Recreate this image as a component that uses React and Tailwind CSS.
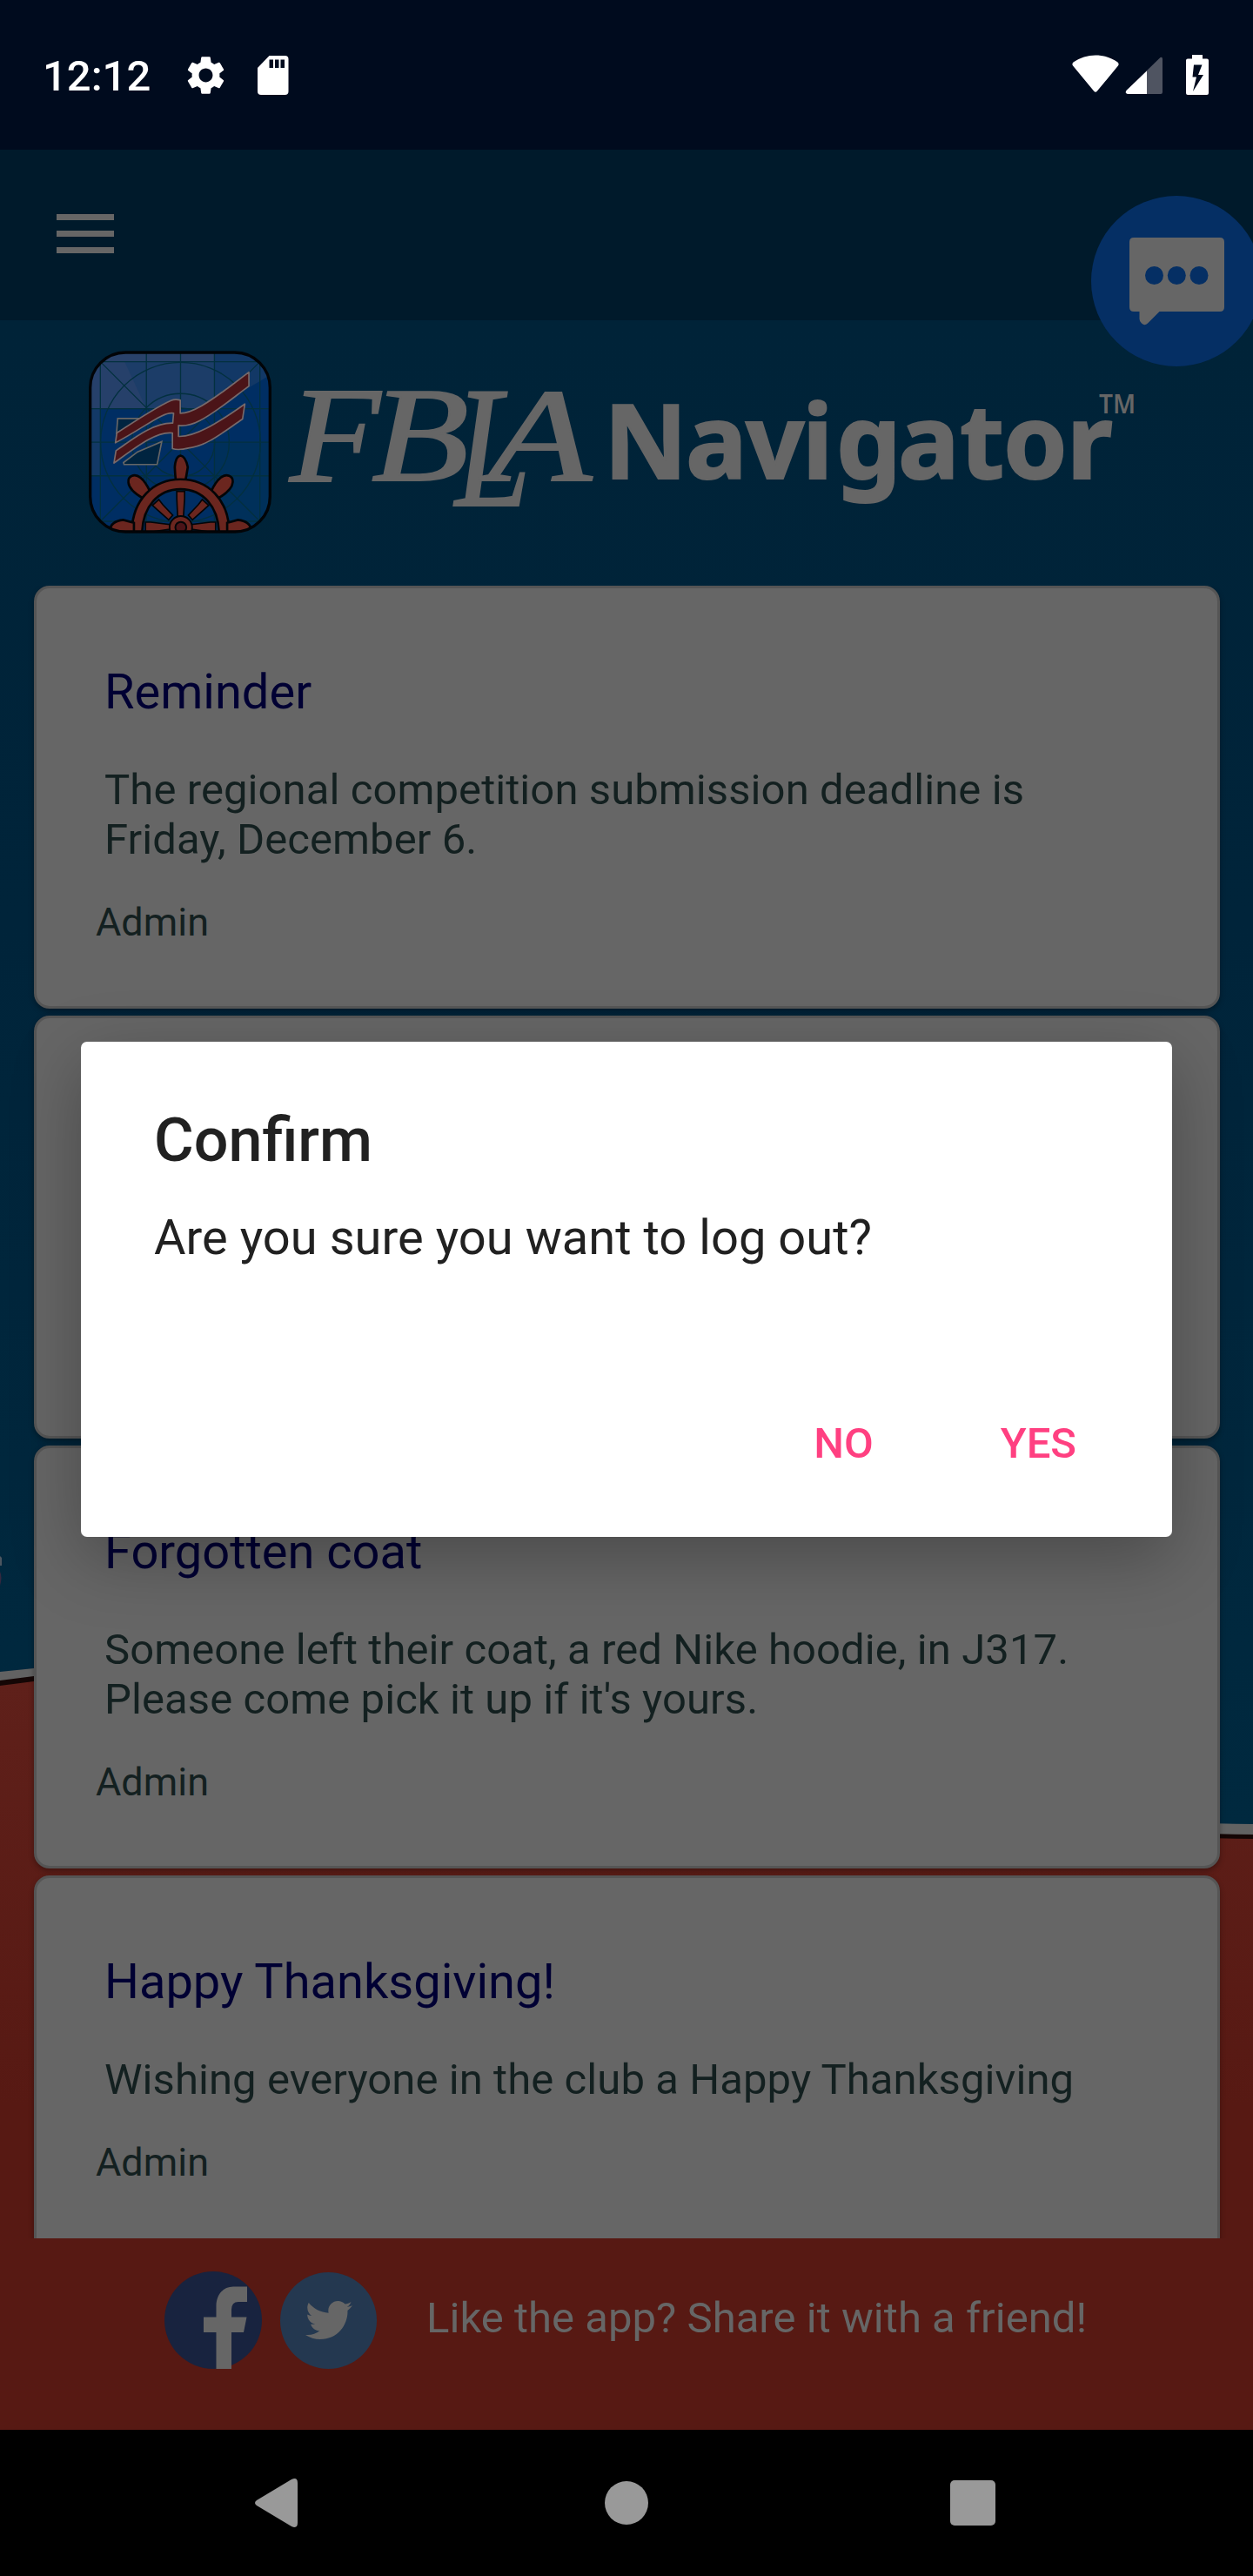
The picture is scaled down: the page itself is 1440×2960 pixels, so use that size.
import React from "react";
import { MdSettings } from "react-icons/md";
import { FaTwitter } from "react-icons/fa";

const posts = [
  { id: 1, title: "Reminder", lines: ["The regional competition submission deadline is", "Friday, December 6."] },
  { id: 2 },
  { id: 3, title: "Forgotten coat", lines: ["Someone left their coat, a red Nike hoodie, in J317.", "Please come pick it up if it's yours."] },
  { id: 4, title: "Happy Thanksgiving!", lines: ["Wishing everyone in the club a Happy Thanksgiving"] },
];

function Backdrop() {
  return (
    <svg className="absolute inset-0 h-full w-full" viewBox="0 0 1440 2960" aria-hidden="true">
      <defs>
        <linearGradient id="sea" x1="0" y1="368" x2="0" y2="2100" gradientUnits="userSpaceOnUse">
          <stop offset="0" stopColor="#002338" />
          <stop offset="0.4" stopColor="#00243a" />
          <stop offset="1" stopColor="#00293f" />
        </linearGradient>
        <linearGradient id="coral" x1="0" y1="1930" x2="0" y2="2420" gradientUnits="userSpaceOnUse">
          <stop offset="0" stopColor="#5f201a" />
          <stop offset="1" stopColor="#571913" />
        </linearGradient>
      </defs>
      <rect width="1440" height="2960" fill="url(#sea)" />
      <path d="M0 1921 L39 1917 C400 1890 1000 2096 1440 2096 V2200 H0Z" fill="#626262" />
      <path d="M0 1931 L39 1926 C400 1900 1000 2107 1440 2108 V2200 H0Z" fill="#140605" />
      <path d="M0 1937 L39 1932 C400 1906 1000 2113 1440 2113 V2960 H0Z" fill="url(#coral)" />
      <path d="M0 1788 L2 1790 V1799 H0Z" fill="#4c5660" />
      <path d="M0 1806 Q3 1812 0 1822Z" fill="#35283f" />
    </svg>
  );
}

function StatusBar() {
  return (
    <div className="relative flex h-[172px] items-center justify-between bg-[#000b1e] pr-[50px] pl-[49px] text-white">
      <div className="flex items-center">
        <span className="w-[161px] pt-[4px] text-[49px] leading-[58px] font-medium">12:12</span>
        <MdSettings className="size-[53px]" />
        <svg className="ml-[33px] h-[45px] w-[36px]" viewBox="0 0 36 45">
          <path d="M13.500 0H31.500a4 4 0 0 1 4 4V41a4 4 0 0 1-4 4H4a4 4 0 0 1-4-4V14Z" fill="#fff" />
          <path d="M13.500 4.500h4.500v9.500h-4.500zM20 4.500h4.500v9.500H20zM26.500 4.500H31v9.500h-4.500z" fill="#000b1e" />
        </svg>
      </div>
      <svg className="h-[46px] w-[158px]" viewBox="0 0 158 46">
        <path d="M1 12.500Q-.5 10.500 1.500 8.500C17-2.300 37-2.300 52.500 8.500Q54.500 10.500 53 12.500L29 41.500Q27 44 25 41.500Z" fill="#fff" />
        <path d="M101.500 3Q104 2 104 5V43q0 2-2 2H64q-4-1-1-4.500Z" fill="#4f5461" />
        <path d="M86 18.500V45H64q-4-1-1-4.500Z" fill="#fff" />
        <path d="M138 0h12v4.500h5a2 2 0 0 1 2 2V44a2 2 0 0 1-2 2h-22a2 2 0 0 1-2-2V6.500a2 2 0 0 1 2-2h5Z" fill="#fff" />
        <path d="M140 11.500h9.500l-4.500 11.500h6L139 42l4-16.500h-4.500Z" fill="#000b1e" />
      </svg>
    </div>
  );
}

function ChatHead() {
  return (
    <svg className="absolute top-[225px] left-[1254px] h-[196px] w-[186px]" viewBox="0 0 186 196">
      <circle cx="98" cy="98" r="98" fill="#052f64" />
      <path d="M49 48H148q5 0 5 5V128q0 5-5 5H78.500L65 146.500q-3.500 3.500-7 0q-2.500-2-2.500-5V133H49q-5 0-5-5V53q0-5 5-5Z" fill="#666" />
      <circle cx="72.500" cy="91.500" r="10.500" fill="#052f64" />
      <circle cx="98.300" cy="91.500" r="10.500" fill="#052f64" />
      <circle cx="124" cy="91.500" r="10.500" fill="#052f64" />
    </svg>
  );
}

function AppBadge() {
  return (
    <svg className="h-[210px] w-[210px]" viewBox="66 69 631 629">
      <defs>
        <clipPath id="badge">
          <rect x="72" y="74" width="620" height="618" rx="122" />
        </clipPath>
      </defs>
      <g clipPath="url(#badge)">
        <rect x="66" y="69" width="631" height="629" fill="#002e63" />
        <path d="M66 106H106V500H66Z" fill="#133966" />
        <path d="M500 69H697V150L560 230H500Z" fill="#123866" />
        <path d="M106 106H500V268H106Z" fill="#1c3d68" />
        <path d="M66 69H500V106H66Z" fill="#29426a" />
        <path d="M66 106H190L265 268H66Z" fill="#26406a" />
        <path d="M500 384H697V698H500Z" fill="#00305a" />
        <g fill="none" stroke="#03303f" strokeWidth="4">
          <path d="M106 69V698M265 69V698M383 69V698M500 69V698M657 69V698M66 106H697M66 268H697M66 384H697M66 500H697M66 657H697M106 106L657 657M657 106L106 657" />
          <circle cx="383" cy="384" r="276" />
          <circle cx="383" cy="384" r="168" />
          <circle cx="383" cy="384" r="118" />
        </g>
        <path d="M166 302H245L222 322L162 352Z" fill="#002440" stroke="#666" strokeWidth="5" />
        <path d="M186 454L235 417L318 382L302 461H188Z" fill="#002440" stroke="#666" strokeWidth="5" />
        <path d="M163 352C230 308 300 262 350 240Q365 234 382 239V284C430 284 500 230 545 198L619 142V190C560 234 500 284 450 309Q410 330 376 326V364C430 366 500 326 605 252L597 304C530 349 470 399 410 404Q375 413 355 406V352C300 345 230 400 153 456L160 413C220 372 290 316 356 318L359 284C325 276 260 332 158 386Z" fill="#4b1418" stroke="#77696a" strokeWidth="5" strokeLinejoin="round" />
        <g stroke="#030507" strokeWidth="8" fill="#6b261f">
          <path d="M363 470Q366 432 383 430Q400 432 408 470Q404 496 399 520H367Q364 496 363 470Z" />
          <path d="M203 523C200 500 225 490 245 507Q262 521 277 553L254 578Q205 550 203 523Z" />
          <path d="M563 523C566 500 541 490 521 507Q504 521 489 553L512 578Q561 550 563 523Z" />
          <path d="M214 698C216 580 290 512 383 512C476 512 550 580 552 698H516C514 606 460 546 383 546C306 546 252 606 250 698Z" />
          <path d="M138 690Q142 656 185 652L222 662V698H138ZM628 690Q624 656 581 652L544 662V698H628Z" />
          <path d="M370 554H397V578L393 642H373L370 578Z" strokeWidth="5" />
          <path d="M286 602L308 582L322 600L356 636L342 652L304 618ZM480 602L458 582L444 600L410 636L424 652L462 618Z" strokeWidth="5" />
          <path d="M262 660H280L346 668V684L280 694H262ZM504 660H486L420 668V684L486 694H504Z" strokeWidth="5" />
          <circle cx="384" cy="678" r="39" strokeWidth="6" />
          <circle cx="384" cy="678" r="19" fill="#4b1418" strokeWidth="6" />
        </g>
      </g>
      <rect x="71" y="74" width="621" height="619" rx="122" fill="none" stroke="#020407" strokeWidth="10" />
    </svg>
  );
}

function Wordmark() {
  return (
    <svg className="h-[180px] w-[1000px] overflow-visible" viewBox="320 420 1000 180" fill="#666">
      <g fontFamily="Liberation Serif, serif" fontStyle="italic" stroke="#666" strokeWidth="2">
        <text x="333" y="553" fontSize="156" textLength="104" lengthAdjust="spacingAndGlyphs">F</text>
        <text x="427" y="552" fontSize="155" textLength="112" lengthAdjust="spacingAndGlyphs">B</text>
        <text x="523" y="581" fontSize="200" textLength="87" lengthAdjust="spacingAndGlyphs">L</text>
        <text x="561" y="552" fontSize="152" textLength="119" lengthAdjust="spacingAndGlyphs">A</text>
      </g>
      <text x="694 788 857 922 961 1032 1103 1153 1226" y="550" fontFamily="Noto Sans, sans-serif" fontWeight="700" fontSize="118" stroke="#666" strokeWidth="2">Navigator</text>
      <text x="1263" y="475" fontFamily="Noto Sans, sans-serif" fontWeight="600" fontSize="30" textLength="42" lengthAdjust="spacingAndGlyphs">TM</text>
    </svg>
  );
}

function PostCard({ title, lines }) {
  return (
    <article className="h-[486px] shrink-0 rounded-[18px] border-[3px] border-[#555] bg-[#666] pt-[86px] pl-[68px] shadow-[0_3px_6px_rgba(0,0,0,0.3)]">
      {title && (
        <>
          <h2 className="pl-[10px] text-[56px] leading-[66px] text-[#000033]">{title}</h2>
          <div className="mt-[51px] pl-[10px] text-[49px] leading-[57px] tracking-[0.08px] text-[#132020]">
            {lines.map((line) => (
              <p key={line}>{line}</p>
            ))}
          </div>
          <p className="mt-[40px] text-[45px] leading-[54px] text-[#132020]">Admin</p>
        </>
      )}
    </article>
  );
}

function ConfirmDialog() {
  return (
    <div role="dialog" className="absolute top-[1197px] left-[93px] flex h-[569px] w-[1254px] flex-col rounded-[7px] bg-white px-[84px] pt-[72px] text-[#212121] shadow-[0_24px_80px_rgba(0,0,0,0.28)]">
      <h1 className="text-[70px] leading-[82px] font-medium">Confirm</h1>
      <p className="mt-[38px] text-[56px] leading-[66px] tracking-[0.04px]">Are you sure you want to log out?</p>
      <div className="mt-[175px] flex justify-end gap-[146px] pr-[26px] text-[49px] leading-[58px] font-medium text-[#ff4081]">
        <button>NO</button>
        <button>YES</button>
      </div>
    </div>
  );
}

export default function App() {
  return (
    <div className="relative flex h-[2960px] w-[1440px] flex-col overflow-hidden font-[Roboto,sans-serif]">
      <Backdrop />
      <StatusBar />
      <header className="relative flex h-[196px] items-start bg-[#001a2b] pt-[74px] pl-[65px]">
        <button aria-label="Menu" className="flex w-[66px] flex-col gap-[12px]">
          <span className="h-[7px] bg-[#666]" />
          <span className="h-[7px] bg-[#666]" />
          <span className="h-[7px] bg-[#666]" />
        </button>
      </header>
      <div className="relative flex h-[305px] items-start gap-[8px] pt-[35px] pl-[102px]">
        <AppBadge />
        <div className="pt-[17px]">
          <Wordmark />
        </div>
      </div>
      <main className="relative flex h-[1899px] flex-col gap-[8px] overflow-hidden pr-[38px] pl-[39px]">
        {posts.map((p) => (
          <PostCard key={p.id} {...p} />
        ))}
      </main>
      <footer className="relative flex h-[220px] items-center pb-[32px] pl-[189px]">
        <svg className="size-[112px]" viewBox="0 0 112 112">
          <circle cx="56" cy="56" r="56" fill="#18233f" />
          <path d="M59.500 112V70H45V52.500H59.500V40C59.500 26 68 17.500 79 17.500H95V35H85Q77 35 77 44V52.500H94.500L91 70H77V112Z" fill="#666" />
        </svg>
        <div className="ml-[21px] flex size-[111px] items-center justify-center rounded-full bg-[#243850] text-[#666]">
          <FaTwitter className="size-[54px]" />
        </div>
        <p className="mb-[5px] ml-[57px] text-[49px] leading-[58px] tracking-[0.04px] text-[#666]">Like the app? Share it with a friend!</p>
      </footer>
      <nav className="relative h-[168px] bg-black">
        <div className="flex h-full items-center justify-between pr-[296px] pl-[293px]">
          <svg className="h-[56px] w-[50px]" viewBox="0 0 50 56" fill="#999">
            <path d="M2 25L42 1Q49-2 49 5V51Q49 58 42 55L2 31Q-2 28 2 25Z" />
          </svg>
          <span className="ml-[4px] size-[50px] rounded-full bg-[#999]" />
          <span className="size-[52px] rounded-[5px] bg-[#999]" />
        </div>
      </nav>
      <ChatHead />
      <ConfirmDialog />
    </div>
  );
}
